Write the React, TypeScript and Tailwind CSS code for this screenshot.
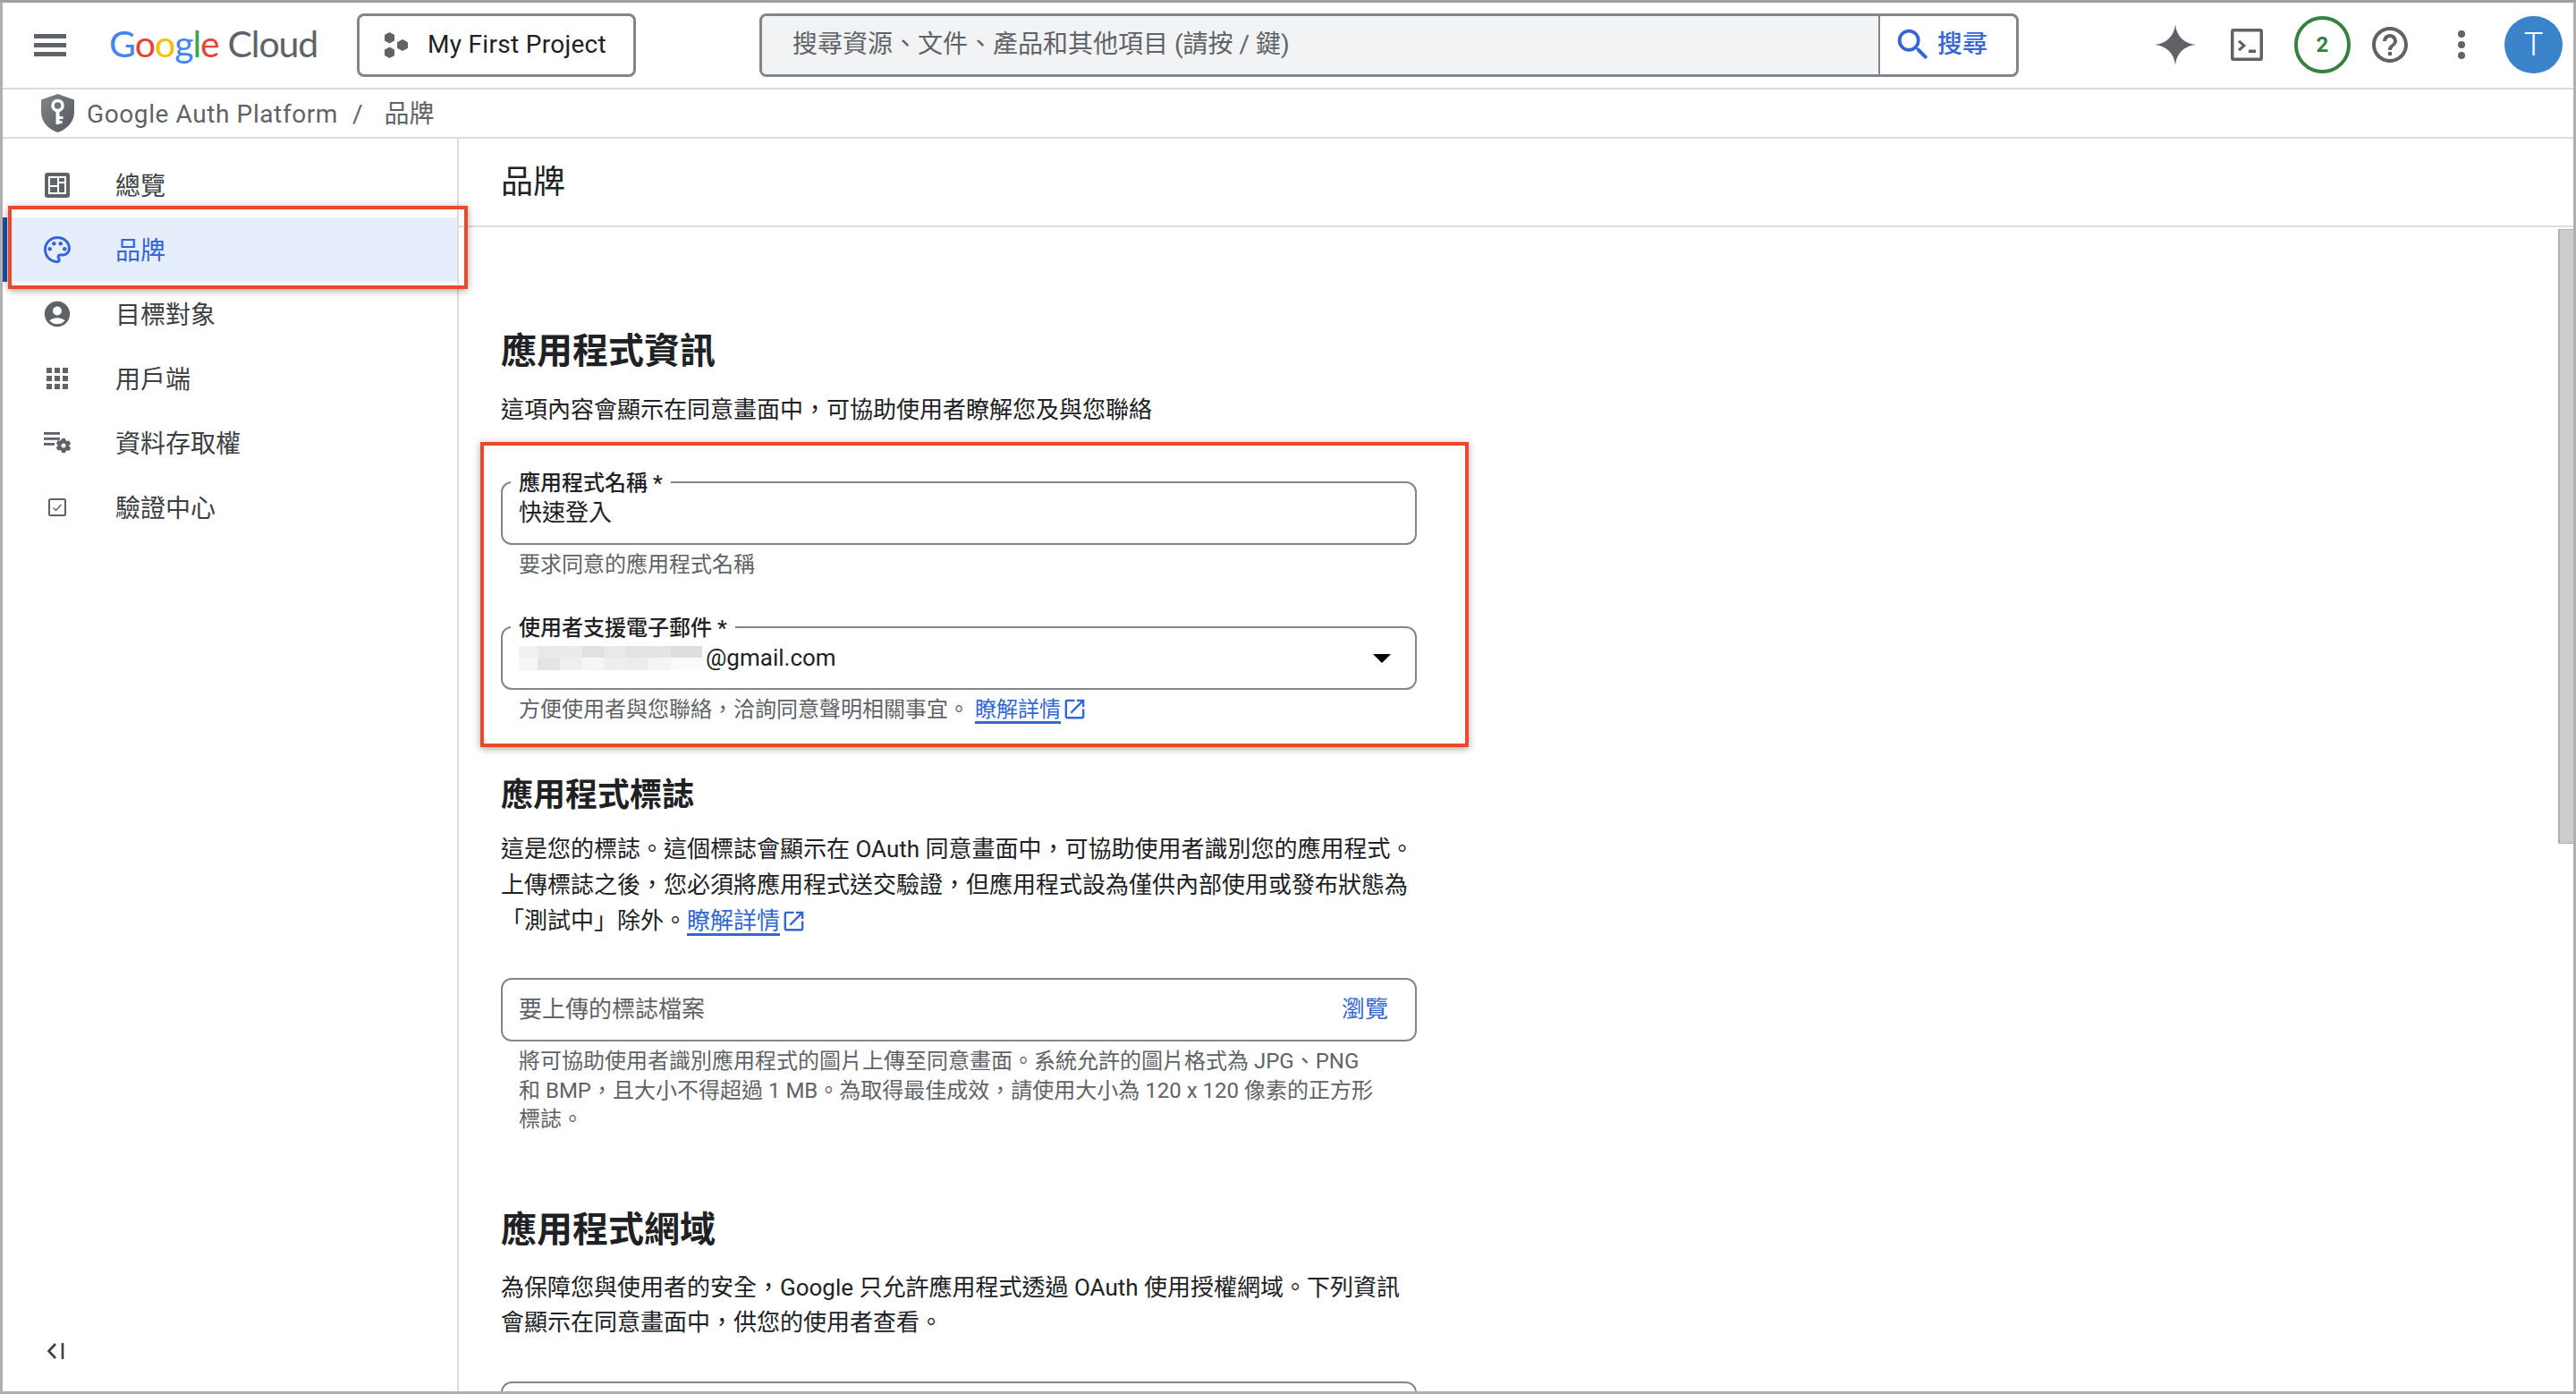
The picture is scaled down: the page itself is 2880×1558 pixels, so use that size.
import React from 'react';

const ExternalIcon = () => (
  <svg viewBox="0 0 24 24" className="inline-block w-[29px] h-[29px] ml-[1px] align-[-6px] fill-[#3367d6]">
    <path d="M19 19H5V5h7V3H5a2 2 0 0 0-2 2v14a2 2 0 0 0 2 2h14c1.1 0 2-.9 2-2v-7h-2v7zM14 3v2h3.59l-9.83 9.83 1.41 1.41L19 6.41V10h2V3h-7z" />
  </svg>
);

const LearnMore = () => (
  <a className="text-[#3367d6]">
    <span className="underline decoration-[3px] underline-offset-[5px]">瞭解詳情</span>
    <ExternalIcon />
  </a>
);

const OverviewIcon = () => (
  <svg viewBox="0 0 28 28" className="w-[28px] h-[28px] fill-[#5f6368]">
    <rect x="0" y="0" width="28" height="28" rx="3" />
    <rect x="4" y="4" width="20" height="20" fill="#fff" />
    <rect x="6" y="6" width="8" height="8" />
    <rect x="6" y="16" width="8" height="6" />
    <rect x="16" y="6" width="6" height="4" />
    <rect x="16" y="12" width="6" height="10" />
  </svg>
);

const PaletteIcon = () => (
  <svg viewBox="0 0 24 24" className="w-[36px] h-[36px] fill-[#3367d6] shrink-0 -mx-[4px]">
    <path d="M12 22C6.49 22 2 17.51 2 12S6.49 2 12 2s10 4.04 10 9c0 3.31-2.69 6-6 6h-1.77c-.28 0-.5.22-.5.5 0 .12.05.23.13.33.41.47.64 1.06.64 1.67A2.5 2.5 0 0 1 12 22zm0-18c-4.41 0-8 3.59-8 8s3.59 8 8 8c.28 0 .5-.22.5-.5a.54.54 0 0 0-.14-.35c-.41-.46-.63-1.05-.63-1.65a2.5 2.5 0 0 1 2.5-2.5H16c2.21 0 4-1.79 4-4 0-3.86-3.59-7-8-7z" />
    <circle cx="6.5" cy="11.5" r="1.5" />
    <circle cx="9.5" cy="7.5" r="1.5" />
    <circle cx="14.5" cy="7.5" r="1.5" />
    <circle cx="17.5" cy="11.5" r="1.5" />
  </svg>
);

const AccountIcon = () => (
  <svg viewBox="0 0 24 24" className="w-[34px] h-[34px] fill-[#5f6368] shrink-0 -mx-[3px]">
    <path d="M12 2C6.48 2 2 6.48 2 12s4.48 10 10 10 10-4.48 10-10S17.52 2 12 2zm0 4c1.93 0 3.5 1.57 3.5 3.5S13.93 13 12 13s-3.5-1.57-3.5-3.5S10.07 6 12 6zm0 14c-2.03 0-4.43-.82-6.14-2.88C7.55 15.8 9.68 15 12 15s4.45.8 6.14 2.12C16.43 19.18 14.03 20 12 20z" />
  </svg>
);

const AppsIcon = () => (
  <svg viewBox="0 0 24 24" className="w-[24px] h-[24px] mx-[2px] fill-[#5f6368]">
    <rect x="0" y="0" width="6" height="6" />
    <rect x="9" y="0" width="6" height="6" />
    <rect x="18" y="0" width="6" height="6" />
    <rect x="0" y="9" width="6" height="6" />
    <rect x="9" y="9" width="6" height="6" />
    <rect x="18" y="9" width="6" height="6" />
    <rect x="0" y="18" width="6" height="6" />
    <rect x="9" y="18" width="6" height="6" />
    <rect x="18" y="18" width="6" height="6" />
  </svg>
);

const DataAccessIcon = () => (
  <svg viewBox="0 0 30 24" className="w-[30px] h-[24px] shrink-0 -mx-[1px] fill-[#5f6368]">
    <rect x="0" y="0" width="18" height="2.8" />
    <rect x="0" y="6" width="18" height="2.8" />
    <rect x="0" y="12" width="12" height="2.8" />
    <path
      fillRule="evenodd"
      d="M20 7h4l.5 2.2 1.6.9 2.1-.7 2 3.4-1.7 1.5v1.8l1.7 1.5-2 3.4-2.1-.7-1.6.9L24 23h-4l-.5-2.2-1.6-.9-2.1.7-2-3.4 1.7-1.5v-1.8l-1.7-1.5 2-3.4 2.1.7 1.6-.9L20 7zm2 5.5a2.5 2.5 0 1 0 0 5 2.5 2.5 0 0 0 0-5z"
    />
  </svg>
);

const VerifyIcon = () => (
  <svg viewBox="0 0 20 20" className="w-[20px] h-[20px] mx-[4px] fill-none stroke-[#5f6368]">
    <rect x="1" y="1" width="18" height="18" rx="1.5" strokeWidth="2" />
    <path d="M5.5 10.5l3 3 6-6.5" strokeWidth="1.4" />
  </svg>
);

const navItems = [
  { label: '總覽', icon: <OverviewIcon /> },
  { label: '品牌', icon: <PaletteIcon />, active: true },
  { label: '目標對象', icon: <AccountIcon /> },
  { label: '用戶端', icon: <AppsIcon /> },
  { label: '資料存取權', icon: <DataAccessIcon /> },
  { label: '驗證中心', icon: <VerifyIcon /> },
];

const blurTop = ['bg-[#f1f1f1]', 'bg-[#e9e9e9]', 'bg-[#ebebeb]', 'bg-[#e1e1e1]', 'bg-[#e9e9e9]', 'bg-[#e3e3e3]', 'bg-[#e4e4e4]', 'bg-[#dedede]'];
const blurBottom = ['bg-[#f6f6f6]', 'bg-[#e4e4e4]', 'bg-[#efefef]', 'bg-[#f5f6f5]', 'bg-[#eeeeee]', 'bg-[#ececec]', 'bg-[#f5f5f5]', 'bg-[#fafafa]'];
const blurWidths = ['w-[21px]', 'w-[25px]', 'w-[25px]', 'w-[24px]', 'w-[25px]', 'w-[25px]', 'w-[25px]', 'w-[35px]'];

const Field = ({ label, children }: { label?: string; children: React.ReactNode }) => (
  <div className="relative w-[1024px] h-[71px] shrink-0 border-2 border-[#80868b] rounded-[12px] flex items-center pl-[18px] pr-[18px]">
    {label && (
      <span className="absolute -top-[14px] left-[9px] px-[9px] bg-white text-[24px] leading-[28px] font-medium text-[#202124] whitespace-nowrap">
        {label}
      </span>
    )}
    {children}
  </div>
);

export default function App() {
  return (
    <div className="relative w-[2880px] h-[1558px] overflow-hidden bg-white flex flex-col border-x-[3px] border-b-[3px] border-t-[3px] border-x-[#b0b0b0] border-b-[#b0b0b0] border-t-[#a0a0a0] font-['Roboto','Noto_Sans_CJK_TC',sans-serif] text-[#202124]">
      {/* TOP BAR */}
      <header className="h-[97px] shrink-0 border-b-2 border-[#dadce0] flex items-center pb-[1px]">
        <div className="ml-[35px] w-[36px] flex flex-col gap-[5px] shrink-0">
          <div className="h-[5px] bg-[#5f6368]" />
          <div className="h-[5px] bg-[#5f6368]" />
          <div className="h-[5px] bg-[#5f6368]" />
        </div>

        <div className="ml-[48px] -mt-[2px] w-[232px] shrink-0 flex items-center font-['Lato',sans-serif] text-[41px] leading-[56px] whitespace-nowrap tracking-[-1.1px]">
          <span className="text-[#4285f4]">G</span>
          <span className="text-[#ea4335]">o</span>
          <span className="text-[#fbbc04]">o</span>
          <span className="text-[#4285f4]">g</span>
          <span className="text-[#34a853]">l</span>
          <span className="text-[#ea4335]">e</span>
          <span className="ml-[10px] text-[#5f6368]">Cloud</span>
        </div>

        <div className="ml-[45px] w-[312px] h-[71px] shrink-0 border-[3px] border-[#80868b] rounded-[8px] flex items-center pl-[28px]">
          <svg viewBox="0 0 26 29" className="w-[26px] h-[29px] fill-[#5f6368]">
            <polygon points="5.5,0 11,3 11,9.5 5.5,12.5 0,9.5 0,3" />
            <polygon points="20,8 26,11.2 26,17.8 20,21 14,17.8 14,11.2" />
            <polygon points="5.5,16.5 11,19.5 11,26 5.5,29 0,26 0,19.5" />
          </svg>
          <span className="ml-[22px] text-[28px] tracking-[0.3px] whitespace-nowrap">My First Project</span>
        </div>

        <div className="ml-[138px] w-[1408px] h-[71px] shrink-0 border-[3px] border-[#80868b] rounded-[8px] flex overflow-hidden">
          <div className="flex-1 bg-[#f1f3f4] flex items-center pl-[34px] text-[28px] text-[#5f6368] whitespace-nowrap">
            搜尋資源、文件、產品和其他項目 (請按 / 鍵)
          </div>
          <div className="w-[154px] border-l-2 border-[#80868b] flex items-center pl-[14px] text-[#3367d6]">
            <svg viewBox="0 0 24 24" className="w-[46px] h-[46px] fill-[#3367d6] shrink-0 mr-[4px]">
              <path d="M15.5 14h-.79l-.28-.27A6.471 6.471 0 0 0 16 9.5 6.5 6.5 0 1 0 9.5 16c1.61 0 3.09-.59 4.23-1.57l.27.28v.79l5 4.99L20.49 19l-4.99-5zm-6 0C7.01 14 5 11.99 5 9.5S7.01 5 9.5 5 14 7.01 14 9.5 11.99 14 9.5 14z" />
            </svg>
            <span className="text-[28px] font-medium whitespace-nowrap">搜尋</span>
          </div>
        </div>

        <svg viewBox="0 0 46 46" className="ml-[152px] w-[46px] h-[46px] shrink-0 fill-[#5f6368]">
          <path d="M23 0C24 13 33 22 46 23 33 24 24 33 23 46 22 33 13 24 0 23 13 22 22 13 23 0z" />
        </svg>

        <svg viewBox="0 0 36 36" className="ml-[39px] w-[36px] h-[36px] shrink-0 fill-[#5f6368]">
          <path fillRule="evenodd" d="M3 0h30a3 3 0 0 1 3 3v30a3 3 0 0 1-3 3H3a3 3 0 0 1-3-3V3a3 3 0 0 1 3-3zM3.5 3.5v29h29v-29h-29z" />
          <path d="M8 15l2.2-2.2 7 6.2-7 6.2L8 23l4.5-4L8 15z" />
          <rect x="20" y="23.5" width="8" height="3.5" />
        </svg>

        <div className="ml-[35px] w-[63px] h-[64px] shrink-0 rounded-full border-[4px] border-[#34823d] flex items-center justify-center text-[24px] font-bold text-[#34823d]">
          2
        </div>

        <svg viewBox="0 0 24 24" className="ml-[20px] w-[48px] h-[48px] shrink-0 fill-[#5f6368]">
          <path d="M11 18h2v-2h-2v2zm1-16C6.48 2 2 6.48 2 12s4.48 10 10 10 10-4.48 10-10S17.52 2 12 2zm0 18c-4.41 0-8-3.59-8-8s3.59-8 8-8 8 3.59 8 8-3.59 8-8 8zm0-14c-2.21 0-4 1.79-4 4h2c0-1.1.9-2 2-2s2 .9 2 2c0 2-3 1.75-3 5h2c0-2.25 3-2.5 3-5 0-2.21-1.79-4-4-4z" />
        </svg>

        <div className="ml-[52px] w-[8px] flex flex-col gap-[4px] shrink-0">
          <div className="h-[8px] rounded-full bg-[#5f6368]" />
          <div className="h-[8px] rounded-full bg-[#5f6368]" />
          <div className="h-[8px] rounded-full bg-[#5f6368]" />
        </div>

        <div className="ml-[44px] w-[65px] h-[64px] shrink-0 rounded-full bg-[#3b84cb] flex items-center justify-center text-[36px] font-light text-white">
          T
        </div>
      </header>

      {/* BREADCRUMB */}
      <div className="h-[55px] shrink-0 border-b-2 border-[#dadce0] flex items-center pt-[2px] text-[28px] text-[#5f6368]">
        <svg viewBox="0 0 37 43" className="ml-[43px] w-[37px] h-[43px] shrink-0 -mt-[2px]">
          <defs>
            <linearGradient id="shieldFill" x1="0" y1="0" x2="1" y2="1">
              <stop offset="0" stopColor="#80868b" />
              <stop offset="1" stopColor="#55585c" />
            </linearGradient>
          </defs>
          <path d="M18.5 0L37 6.5v14C37 31 29 39.5 18.5 43 8 39.5 0 31 0 20.5v-14L18.5 0z" fill="url(#shieldFill)" />
          <circle cx="18.5" cy="13" r="5.5" fill="none" stroke="#fff" strokeWidth="3.5" />
          <path d="M16.5 17h4v17h-4zM20 25h4.5v3H20zM20 30h3.5v3H20z" fill="#fff" />
        </svg>
        <span className="ml-[14px] tracking-[0.6px] whitespace-nowrap">Google Auth Platform</span>
        <span className="ml-[16px] whitespace-nowrap">/</span>
        <span className="ml-[24px] whitespace-nowrap">品牌</span>
      </div>

      {/* BODY */}
      <div className="flex-1 min-h-0 flex">
        <aside className="w-[510px] shrink-0 border-r-2 border-[#dadce0] flex flex-col pt-[16px] pb-[36px]">
          {navItems.map((item) => (
            <div
              key={item.label}
              className={`h-[72px] shrink-0 flex items-center pl-[42px] border-l-[5px] ${item.active ? 'bg-[#e6edfb] border-[#1f4ea6] text-[#3367d6]' : 'border-transparent text-[#3c4043]'}`}
            >
              <div className="w-[28px] flex justify-center shrink-0">{item.icon}</div>
              <span className="ml-[51px] pt-[3px] text-[28px] whitespace-nowrap">{item.label}</span>
            </div>
          ))}
          <svg viewBox="0 0 20 18" className="mt-auto ml-[49px] w-[20px] h-[18px] fill-none stroke-[#3c4043]">
            <path d="M10 1L2.5 9l7.5 8" strokeWidth="2.6" />
            <path d="M18 0v18" strokeWidth="2.6" />
          </svg>
        </aside>

        <main className="flex-1 min-w-0 flex flex-col">
          <div className="h-[99px] shrink-0 border-b-2 border-[#dadce0] flex items-center pl-[47px] text-[36px]">品牌</div>

          <div className="pl-[47px] flex flex-col whitespace-nowrap">
            <h2 className="mt-[114px] text-[40px] leading-[50px] font-semibold">應用程式資訊</h2>
            <p className="mt-[20px] text-[26px] leading-[40px]">這項內容會顯示在同意畫面中，可協助使用者瞭解您及與您聯絡</p>

            <div className="mt-[60px]">
              <Field label="應用程式名稱 *">
                <span className="text-[26px]">快速登入</span>
              </Field>
            </div>
            <p className="mt-[6px] pl-[20px] text-[24px] leading-[32px] text-[#5f6368]">要求同意的應用程式名稱</p>

            <div className="mt-[53px]">
              <Field label="使用者支援電子郵件 *">
                <div className="flex flex-col shrink-0">
                  <div className="flex h-[13px]">
                    {blurTop.map((c, i) => (
                      <div key={i} className={`${c} ${blurWidths[i]}`} />
                    ))}
                  </div>
                  <div className="flex h-[14px]">
                    {blurBottom.map((c, i) => (
                      <div key={i} className={`${c} ${blurWidths[i]}`} />
                    ))}
                  </div>
                </div>
                <span className="ml-[4px] text-[26px]">@gmail.com</span>
                <div className="ml-auto mr-[9px] w-0 h-0 border-x-[10px] border-x-transparent border-t-[10px] border-t-black" />
              </Field>
            </div>
            <p className="mt-[6px] pl-[20px] text-[24px] leading-[32px] text-[#5f6368]">
              方便使用者與您聯絡，洽詢同意聲明相關事宜。 <LearnMore />
            </p>

            <h2 className="mt-[55px] text-[36px] leading-[50px] font-semibold">應用程式標誌</h2>
            <p className="mt-[15px] text-[26px] leading-[40px]">
              這是您的標誌。這個標誌會顯示在 OAuth 同意畫面中，可協助使用者識別您的應用程式。
              <br />
              上傳標誌之後，您必須將應用程式送交驗證，但應用程式設為僅供內部使用或發布狀態為
              <br />
              「測試中」除外。<LearnMore />
            </p>

            <div className="mt-[44px]">
              <Field>
                <span className="text-[26px] text-[#5f6368]">要上傳的標誌檔案</span>
                <span className="ml-auto mr-[12px] text-[26px] text-[#3367d6]">瀏覽</span>
              </Field>
            </div>
            <p className="mt-[6px] pl-[20px] text-[24px] leading-[32.5px] text-[#5f6368]">
              將可協助使用者識別應用程式的圖片上傳至同意畫面。系統允許的圖片格式為 JPG、PNG
              <br />
              和 BMP，且大小不得超過 1 MB。為取得最佳成效，請使用大小為 120 x 120 像素的正方形
              <br />
              標誌。
            </p>

            <h2 className="mt-[82px] text-[40px] leading-[50px] font-semibold">應用程式網域</h2>
            <p className="mt-[20px] text-[26px] leading-[39.5px]">
              為保障您與使用者的安全，Google 只允許應用程式透過 OAuth 使用授權網域。下列資訊
              <br />
              會顯示在同意畫面中，供您的使用者查看。
            </p>

            <div className="mt-[45px]">
              <Field>
                <span />
              </Field>
            </div>
          </div>
        </main>
      </div>

      {/* SCROLLBAR */}
      <div className="absolute left-[2857px] top-[253px] w-[18px] h-[687px] bg-[#cccccc] border-l-2 border-y border-[#b0b0b0]" />

      {/* ANNOTATION BOXES */}
      <div className="absolute left-[6px] top-[227px] w-[514px] h-[93px] border-[4px] border-[#ef4729] shadow-[0_2px_8px_rgba(0,0,0,0.35)]" />
      <div className="absolute left-[534px] top-[491px] w-[1105px] h-[341px] border-[4px] border-[#ef4729] shadow-[0_2px_8px_rgba(0,0,0,0.35)]" />
    </div>
  );
}
